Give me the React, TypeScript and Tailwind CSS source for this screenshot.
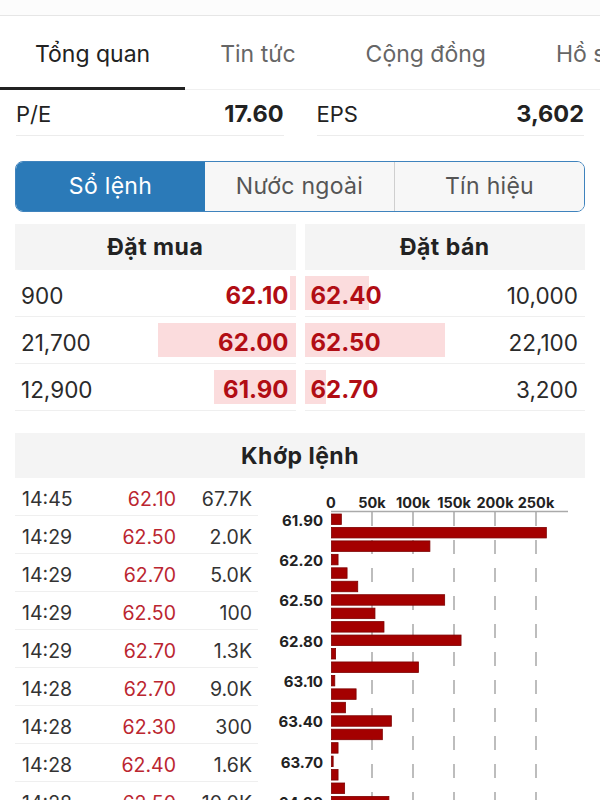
import { clsx } from "clsx";

const tabs = ["Tổng quan", "Tin tức", "Cộng đồng", "Hồ sơ"];
const segments = ["Sổ lệnh", "Nước ngoài", "Tín hiệu"];

// width of the depth bar in px
const bids = [
  { qty: "900", price: "62.10", depth: 6 },
  { qty: "21,700", price: "62.00", depth: 138 },
  { qty: "12,900", price: "61.90", depth: 82 },
];
const asks = [
  { qty: "10,000", price: "62.40", depth: 64 },
  { qty: "22,100", price: "62.50", depth: 140 },
  { qty: "3,200", price: "62.70", depth: 21 },
];

const trades = [
  ["14:45", "62.10", "67.7K"],
  ["14:29", "62.50", "2.0K"],
  ["14:29", "62.70", "5.0K"],
  ["14:29", "62.50", "100"],
  ["14:29", "62.70", "1.3K"],
  ["14:28", "62.70", "9.0K"],
  ["14:28", "62.30", "300"],
  ["14:28", "62.40", "1.6K"],
  ["14:28", "62.50", "10.0K"],
];

// matched volume per price step (k), starting at 61.90
const volumes = [12, 262, 120, 8, 19, 32, 138, 53, 64, 158, 5, 106, 4, 30, 17, 73, 62, 8, 2, 8, 16, 70];

function VolumeChart() {
  const x0 = 61;
  const perK = 41 / 50;
  const pitch = 13.45;
  const ticks = [0, 50, 100, 150, 200, 250];
  return (
    <svg width={315} height={330} className="block overflow-visible">
      {ticks.map((t) => (
        <text
          key={t}
          x={x0 + t * perK}
          y={26}
          textAnchor="middle"
          dominantBaseline="middle"
          fontSize={14.5}
          fontWeight={700}
          fill="#222"
        >
          {t === 0 ? "0" : `${t}k`}
        </text>
      ))}
      <line x1={x0} x2={298} y1={33.5} y2={33.5} stroke="#aaa" strokeWidth={1.5} />
      {ticks.slice(1).map((t) => (
        <line
          key={t}
          x1={x0 + t * perK}
          x2={x0 + t * perK}
          y1={34}
          y2={330}
          stroke="#a8a8a8"
          strokeWidth={1.5}
          strokeDasharray="14 14"
        />
      ))}
      {volumes.map((v, i) => {
        const y = 36 + i * pitch;
        return (
          <g key={i}>
            <rect
              x={x0 + 0.5}
              y={y}
              width={Math.max(v * perK, 1.2)}
              height={10.5}
              fill="#a40000"
              stroke="#7d0000"
              strokeWidth={0.8}
            />
            {i % 3 === 0 && (
              <text
                x={53}
                y={y + 7.5}
                textAnchor="end"
                dominantBaseline="middle"
                fontSize={15}
                fontWeight={700}
                fill="#222"
              >
                {(61.9 + i * 0.1).toFixed(2)}
              </text>
            )}
          </g>
        );
      })}
    </svg>
  );
}

export default function App() {
  return (
    <div className="h-[800px] w-[600px] overflow-hidden bg-white font-['Inter','Noto_Sans',sans-serif] text-[#222]">
      <div className="h-4 border-b border-[#e6e6e6] bg-[#fcfcfc]" />

      <div className="flex h-[74px] whitespace-nowrap border-b border-[#f0f0f0] pt-[3px]">
        {tabs.map((t, i) => (
          <div
            key={t}
            className={clsx(
              "relative flex shrink-0 items-center px-[35px] text-[23px]",
              i === 0 ? "text-[#222]" : "text-[#666]"
            )}
          >
            {t}
            {i === 0 && <div className="absolute -bottom-px left-0 right-0 h-[3px] bg-[#222]" />}
          </div>
        ))}
      </div>

      <div className="mx-4 flex gap-[33px]">
        <div className="flex h-[46px] flex-1 items-center justify-between border-b border-[#ececec] pt-[3px] text-[22px]">
          <span>P/E</span>
          <span className="text-[23.5px] font-bold">17.60</span>
        </div>
        <div className="flex h-[46px] flex-1 items-center justify-between border-b border-[#ececec] pt-[3px] text-[22px]">
          <span>EPS</span>
          <span className="text-[23.5px] font-bold">3,602</span>
        </div>
      </div>

      <div className="mx-[15px] mt-[25px] flex h-[51px] overflow-hidden rounded-[8px] border border-[#3f83bd]">
        {segments.map((s, i) => (
          <div
            key={s}
            className={clsx(
              "flex flex-1 items-center justify-center text-[23px] tracking-[0.3px]",
              i === 0 ? "bg-[#2b7ab8] text-white" : "bg-[#f7f7f7] text-[#555]",
              i === 2 && "border-l border-[#cfcfcf]"
            )}
          >
            {s}
          </div>
        ))}
      </div>

      <div className="mx-[15px] mt-3 grid grid-cols-2 gap-x-[9px]">
        <div>
          <div className="flex h-[46px] items-center justify-center bg-[#f4f4f4] text-[23px] font-bold tracking-[0.5px]">Đặt mua</div>
          {bids.map((r) => (
            <div key={r.price} className="relative flex h-[47px] items-center justify-between border-b border-[#efefef] pl-[6px] pr-[7px] pt-[6px]">
              <div className="absolute bottom-[6px] right-0 top-[6px] bg-[#fbdcdd]" style={{ width: r.depth }} />
              <span className="relative text-[22.5px] text-[#2a2a2a]">{r.qty}</span>
              <span className="relative text-[24px] font-bold text-[#b10d14]">{r.price}</span>
            </div>
          ))}
        </div>
        <div>
          <div className="flex h-[46px] items-center justify-center bg-[#f4f4f4] text-[23px] font-bold tracking-[0.5px]">Đặt bán</div>
          {asks.map((r) => (
            <div key={r.price} className="relative flex h-[47px] items-center justify-between border-b border-[#efefef] pl-[6px] pr-[7px] pt-[6px]">
              <div className="absolute bottom-[6px] left-0 top-[6px] bg-[#fbdcdd]" style={{ width: r.depth }} />
              <span className="relative text-[24px] font-bold text-[#b10d14]">{r.price}</span>
              <span className="relative text-[22.5px] text-[#2a2a2a]">{r.qty}</span>
            </div>
          ))}
        </div>
      </div>

      <div className="mx-[15px] mt-[22px] flex h-[45px] items-center justify-center bg-[#f4f4f4] pt-[2px] text-[23px] font-bold tracking-[0.5px]">
        Khớp lệnh
      </div>

      <div className="flex px-[15px]">
        <div className="w-[243px] shrink-0">
          {trades.map(([time, price, vol], i) => (
            <div key={i} className="flex h-[38px] items-center border-b border-[#efefef] pt-[6px] text-[19.5px]">
              <span className="w-[80px] pl-[7px] text-[#333]">{time}</span>
              <span className="w-[81px] text-right text-[#bb2630]">{price}</span>
              <span className="w-[76px] text-right text-[#333]">{vol}</span>
            </div>
          ))}
        </div>
        <div className="ml-3">
          <VolumeChart />
        </div>
      </div>
    </div>
  );
}
